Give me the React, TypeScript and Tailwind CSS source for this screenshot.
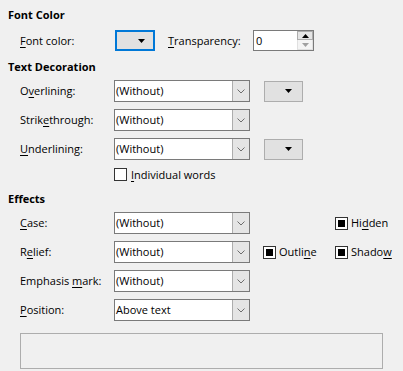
import React from "react";

function Mn({ t, i }: { t: string; i: number }) {
  return (
    <>
      {t.slice(0, i)}
      <span className="underline decoration-1 underline-offset-[2px]">{t[i]}</span>
      {t.slice(i + 1)}
    </>
  );
}

function Chevron() {
  return (
    <svg width="8" height="5" viewBox="0 0 8 5">
      <path d="M0.5 0.5 L4 4 L7.5 0.5" fill="none" stroke="#6d6d6d" strokeWidth="1" />
    </svg>
  );
}

function Tri({ color = "#000" }: { color?: string }) {
  return (
    <svg width="7" height="4" viewBox="0 0 7 4">
      <path d="M0 0 H7 L3.5 4 Z" fill={color} />
    </svg>
  );
}

function Combo({ value }: { value: string }) {
  return (
    <div className="flex h-[22px] w-[136px] border border-[#7a7a7a] bg-white">
      <div className="flex-1 pl-[1px] leading-[20px]">{value}</div>
      <div className="flex w-[17px] items-center justify-center border-l border-[#adadad] bg-[#e5e5e5]">
        <Chevron />
      </div>
    </div>
  );
}

function ColorBtn() {
  return (
    <div className="ml-[14px] flex h-[21px] w-[39px] items-center justify-end border border-[#adadad] bg-[#e1e1e1] pr-[10px]">
      <Tri />
    </div>
  );
}

function Tristate({ label }: { label: React.ReactNode }) {
  return (
    <div className="flex items-center gap-[3px]">
      <div className="flex h-[13px] w-[13px] items-center justify-center border border-[#333] bg-white">
        <div className="h-[7px] w-[7px] bg-black" />
      </div>
      <span className="leading-[16px]">{label}</span>
    </div>
  );
}

function Row({ label, children }: { label: React.ReactNode; children: React.ReactNode }) {
  return (
    <div className="flex h-[22px] items-center">
      <div className="w-[106px] pl-[12px] leading-[16px]">{label}</div>
      {children}
    </div>
  );
}

export default function App() {
  return (
    <div
      className="h-[371px] w-[403px] overflow-hidden bg-[#f0f0f0] px-[8px] pt-[7px] text-[11px] text-black"
      style={{ fontFamily: '"Open Sans", "Noto Sans", sans-serif' }}
    >
      <div className="h-[16px] font-bold leading-[16px]">Font Color</div>
      <div className="mt-[7px] flex h-[21px] items-center">
        <div className="w-[107px] pl-[12px] leading-[16px]">
          <Mn t="Font color:" i={0} />
        </div>
        <div className="flex h-[21px] w-[40px] items-center justify-end border-2 border-[#0078d7] bg-[#e1e1e1] pr-[8px]">
          <Tri />
        </div>
        <div className="ml-[13px] w-[85px] leading-[16px]">
          <Mn t="Transparency:" i={0} />
        </div>
        <div className="flex h-[21px] w-[61px] border border-[#7a7a7a] bg-white">
          <div className="flex-1 pl-[2px] leading-[19px]">0</div>
          <div className="flex w-[16px] flex-col">
            <div className="flex h-[9px] items-center justify-center border border-[#adadad] bg-[#e5e5e5]">
              <svg width="7" height="4" viewBox="0 0 7 4">
                <path d="M0 4 H7 L3.5 0 Z" fill="#000" />
              </svg>
            </div>
            <div className="flex flex-1 items-center justify-center border border-t-0 border-[#e0e0e0] bg-[#f4f4f4]">
              <Tri color="#a0a0a0" />
            </div>
          </div>
        </div>
      </div>

      <div className="mt-[8px] h-[16px] font-bold leading-[16px]">Text Decoration</div>
      <div className="mt-[5px]">
        <Row label={<Mn t="Overlining:" i={1} />}>
          <Combo value="(Without)" />
          <ColorBtn />
        </Row>
      </div>
      <div className="mt-[7px]">
        <Row label={<Mn t="Strikethrough:" i={5} />}>
          <Combo value="(Without)" />
        </Row>
      </div>
      <div className="mt-[7px]">
        <Row label={<Mn t="Underlining:" i={0} />}>
          <Combo value="(Without)" />
          <ColorBtn />
        </Row>
      </div>
      <div className="mt-[8px] flex h-[13px] items-center pl-[106px]">
        <div className="h-[13px] w-[13px] border border-[#333] bg-white" />
        <span className="ml-[4px] leading-[16px]">
          <Mn t="Individual words" i={0} />
        </span>
      </div>

      <div className="mt-[10px] h-[16px] font-bold leading-[16px]">Effects</div>
      <div className="mt-[5px]">
        <Row label={<Mn t="Case:" i={0} />}>
          <Combo value="(Without)" />
          <div className="ml-[85px]">
            <Tristate label={<Mn t="Hidden" i={2} />} />
          </div>
        </Row>
      </div>
      <div className="mt-[7px]">
        <Row label={<Mn t="Relief:" i={1} />}>
          <Combo value="(Without)" />
          <div className="ml-[13px] w-[72px]">
            <Tristate label={<Mn t="Outline" i={5} />} />
          </div>
          <Tristate label={<Mn t="Shadow" i={5} />} />
        </Row>
      </div>
      <div className="mt-[7px]">
        <Row label={<Mn t="Emphasis mark:" i={9} />}>
          <Combo value="(Without)" />
        </Row>
      </div>
      <div className="mt-[7px]">
        <Row label={<Mn t="Position:" i={0} />}>
          <Combo value="Above text" />
        </Row>
      </div>

      <div className="ml-[12px] mt-[12px] h-[36px] w-[363px] border border-[#adadad] bg-[#f0f0f0]" />
    </div>
  );
}
